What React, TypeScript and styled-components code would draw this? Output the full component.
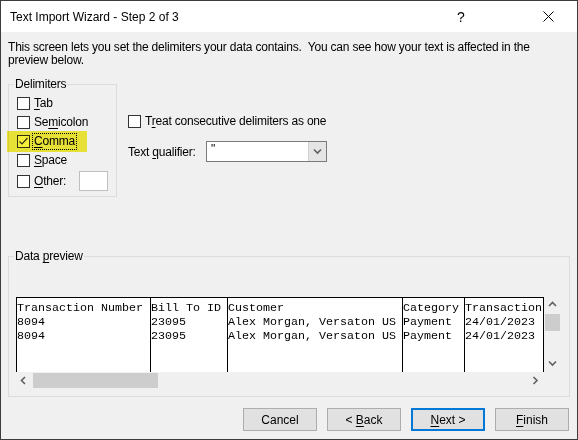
import React from "react";
import styled, { createGlobalStyle } from "styled-components";

const GlobalStyle = createGlobalStyle`
  html, body {
    margin: 0;
    padding: 0;
    background: #f0f0f0;
  }
  * {
    box-sizing: border-box;
  }
`;

const UI_FONT = `"Liberation Sans", Arial, sans-serif`;
const MONO_FONT = `"Liberation Mono", "Courier New", monospace`;

const Window = styled.div`
  width: 578px;
  height: 440px;
  border: 1px solid #3c3c3c;
  background: #f0f0f0;
  display: flex;
  flex-direction: column;
  font-family: ${UI_FONT};
  font-size: 12px;
  color: #000;
  overflow: hidden;
`;

const TitleBar = styled.div`
  height: 31px;
  flex: none;
  background: #fff;
  display: flex;
  align-items: center;
  padding: 0 6px 0 9px;
`;

const Title = styled.div`
  flex: 1;
`;

const TitleButton = styled.div<{ $gap?: number }>`
  width: 46px;
  height: 31px;
  margin-right: ${(p) => p.$gap ?? 0}px;
  display: flex;
  align-items: center;
  justify-content: center;
  font-size: 14px;
`;

const Body = styled.div`
  flex: 1;
  padding: 9px 7px 0 7px;
  display: flex;
  flex-direction: column;
  letter-spacing: -0.2px;
`;

const Intro = styled.p`
  margin: 0;
  line-height: 13px;
  white-space: nowrap;
`;

const TopSection = styled.div`
  display: flex;
  margin-top: 11px;
`;

const Group = styled.fieldset<{ $width?: number }>`
  margin: 0;
  min-width: 0;
  width: ${(p) => (p.$width ? `${p.$width}px` : "auto")};
  border: 1px solid #dcdcdc;
  padding: 0 8px 4px 8px;
`;

const Legend = styled.legend`
  padding: 0 1px;
  margin-left: -3px;
  line-height: 13px;
`;

const CheckList = styled.div`
  display: flex;
  flex-direction: column;
  padding-top: 3px;
`;

const CheckRow = styled.div<{ $tall?: boolean }>`
  position: relative;
  display: flex;
  align-items: center;
  gap: 4px;
  height: ${(p) => (p.$tall ? "22px" : "19px")};
`;

/* marker-pen highlight laid over a row */
const Highlight = styled.span`
  position: absolute;
  left: -10px;
  top: -1px;
  width: 80px;
  height: 21px;
  background: #f6ef3a;
  mix-blend-mode: multiply;
  pointer-events: none;
`;

const Box = styled.span`
  width: 13px;
  height: 13px;
  flex: none;
  border: 1px solid #333;
  background: #fff;
  display: flex;
  align-items: center;
  justify-content: center;
`;

const Label = styled.span<{ $focus?: boolean }>`
  line-height: 13px;
  padding: 1px;
  border: 1px dotted ${(p) => (p.$focus ? "#000" : "transparent")};
  margin-left: -2px;
  white-space: nowrap;
`;

const Key = styled.u`
  text-underline-offset: 2px;
`;

const SmallInput = styled.span`
  width: 29px;
  height: 20px;
  margin-left: auto;
  background: #fff;
  border: 1px solid #bfbfbf;
`;

const Options = styled.div`
  margin-left: 11px;
  padding-top: 35px;
  display: flex;
  flex-direction: column;
  gap: 11px;
`;

const OptionRow = styled.div`
  display: flex;
  align-items: center;
  gap: 4px;
`;

const FieldLabel = styled.span`
  width: 74px;
`;

const Combo = styled.div`
  width: 121px;
  height: 21px;
  background: #fff;
  border: 1px solid #7a7a7a;
  display: flex;
`;

const ComboValue = styled.span`
  flex: 1;
  padding-left: 4px;
  line-height: 15px;
`;

const ComboButton = styled.span`
  width: 18px;
  background: #e5e5e5;
  border-left: 1px solid #d0d0d0;
  display: flex;
  align-items: center;
  justify-content: center;
`;

const PreviewGroup = styled(Group)`
  margin-top: 53px;
  padding: 0 0 7px 7px;
`;

const PreviewLegend = styled(Legend)`
  margin-left: -2px;
`;

const Preview = styled.div`
  margin-top: 34px;
  display: grid;
  grid-template-columns: 528px 17px;
  grid-template-rows: 75px 17px;
`;

const Sheet = styled.div`
  background: #fff;
  border-top: 1px solid #000;
  display: flex;
  overflow: hidden;
  font-family: ${MONO_FONT};
  font-size: 11.67px;
  letter-spacing: 0;
`;

const Column = styled.div<{ $width: number; $last?: boolean }>`
  flex: none;
  width: ${(p) => p.$width}px;
  border-left: 1px solid #000;
  border-right: ${(p) => (p.$last ? "1px solid #000" : "none")};
  padding-top: 3px;
  white-space: pre;
  overflow: hidden;
`;

const Cell = styled.div`
  height: 14px;
  line-height: 14px;
`;

const ScrollV = styled.div`
  background: #f0f0f0;
  display: flex;
  flex-direction: column;
  align-items: center;
  justify-content: space-between;
  padding: 4px 0 5px;
  position: relative;
`;

const ThumbV = styled.div`
  position: absolute;
  left: 1px;
  top: 17px;
  width: 15px;
  height: 17px;
  background: #cdcdcd;
`;

const ScrollH = styled.div`
  background: #f0f0f0;
  display: flex;
  align-items: center;
  justify-content: space-between;
  padding: 0 5px 0 4px;
  position: relative;
`;

const ThumbH = styled.div`
  position: absolute;
  left: 17px;
  top: 1px;
  width: 125px;
  height: 15px;
  background: #cdcdcd;
`;

const Corner = styled.div`
  background: #f0f0f0;
`;

const ButtonRow = styled.div`
  display: flex;
  justify-content: flex-end;
  gap: 10px;
  margin-top: 11px;
  padding-right: 1px;
`;

const Button = styled.button<{ $default?: boolean }>`
  width: 74px;
  height: 23px;
  font-family: ${UI_FONT};
  font-size: 12px;
  color: #000;
  background: #e1e1e1;
  border: ${(p) => (p.$default ? "2px solid #0078d7" : "1px solid #adadad")};
  padding: 0;
`;

const Chevron = ({ dir }: { dir: "up" | "down" | "left" | "right" }) => {
  const points = {
    up: "1,5 4.5,1.5 8,5",
    down: "1,1.5 4.5,5 8,1.5",
    left: "5,1 1.5,4.5 5,8",
    right: "1.5,1 5,4.5 1.5,8",
  }[dir];
  const vertical = dir === "up" || dir === "down";
  return (
    <svg width={vertical ? 9 : 7} height={vertical ? 7 : 9} viewBox={vertical ? "0 0 9 7" : "0 0 7 9"}>
      <polyline points={points} fill="none" stroke="#606060" strokeWidth="1.6" />
    </svg>
  );
};

const Check = () => (
  <svg width="11" height="11" viewBox="0 0 11 11">
    <polyline points="1.5,5.5 4,8 9.5,2" fill="none" stroke="#333" strokeWidth="1.2" />
  </svg>
);

const columns = [
  { width: 134, cells: ["Transaction Number", "8094", "8094"] },
  { width: 77, cells: ["Bill To ID", "23095", "23095"] },
  { width: 175, cells: ["Customer", "Alex Morgan, Versaton US", "Alex Morgan, Versaton US"] },
  { width: 62, cells: ["Category", "Payment", "Payment"] },
  { width: 80, cells: ["Transaction", "24/01/2023", "24/01/2023"] },
];

type Delim = { pre: string; key: string; post: string; checked?: boolean; focus?: boolean };

const delimiters: Delim[] = [
  { pre: "", key: "T", post: "ab" },
  { pre: "Se", key: "m", post: "icolon" },
  { pre: "", key: "C", post: "omma", checked: true, focus: true },
  { pre: "", key: "S", post: "pace" },
];

export default function App() {
  return (
    <>
      <GlobalStyle />
      <Window>
        <TitleBar>
          <Title>Text Import Wizard - Step 2 of 3</Title>
          <TitleButton $gap={41}>?</TitleButton>
          <TitleButton>
            <svg width="11" height="11" viewBox="0 0 11 11">
              <path d="M0.5 0.5 L10.5 10.5 M10.5 0.5 L0.5 10.5" stroke="#000" strokeWidth="1" />
            </svg>
          </TitleButton>
        </TitleBar>
        <Body>
          <Intro>
            This screen lets you set the delimiters your data contains.&nbsp; You can see how your text is affected in the
            <br />
            preview below.
          </Intro>
          <TopSection>
            <Group $width={109}>
              <Legend>Delimiters</Legend>
              <CheckList>
                {delimiters.map((d) => (
                  <CheckRow key={d.post}>
                    <Box>{d.checked && <Check />}</Box>
                    <Label $focus={d.focus}>
                      {d.pre}
                      <Key>{d.key}</Key>
                      {d.post}
                    </Label>
                    {d.focus && <Highlight />}
                  </CheckRow>
                ))}
                <CheckRow $tall>
                  <Box />
                  <Label>
                    <Key>O</Key>ther:
                  </Label>
                  <SmallInput />
                </CheckRow>
              </CheckList>
            </Group>
            <Options>
              <OptionRow>
                <Box />
                <Label>
                  T<Key>r</Key>eat consecutive delimiters as one
                </Label>
              </OptionRow>
              <OptionRow>
                <FieldLabel>
                  Text <Key>q</Key>ualifier:
                </FieldLabel>
                <Combo>
                  <ComboValue>"</ComboValue>
                  <ComboButton>
                    <Chevron dir="down" />
                  </ComboButton>
                </Combo>
              </OptionRow>
            </Options>
          </TopSection>
          <PreviewGroup>
            <PreviewLegend>
              Data <Key>p</Key>review
            </PreviewLegend>
            <Preview>
              <Sheet>
                {columns.map((c, i) => (
                  <Column key={c.cells[0]} $width={c.width} $last={i === columns.length - 1}>
                    {c.cells.map((t, j) => (
                      <Cell key={j}>{t}</Cell>
                    ))}
                  </Column>
                ))}
              </Sheet>
              <ScrollV>
                <Chevron dir="up" />
                <ThumbV />
                <Chevron dir="down" />
              </ScrollV>
              <ScrollH>
                <Chevron dir="left" />
                <ThumbH />
                <Chevron dir="right" />
              </ScrollH>
              <Corner />
            </Preview>
          </PreviewGroup>
          <ButtonRow>
            <Button>Cancel</Button>
            <Button>
              &lt; <Key>B</Key>ack
            </Button>
            <Button $default>
              <Key>N</Key>ext &gt;
            </Button>
            <Button>
              <Key>F</Key>inish
            </Button>
          </ButtonRow>
        </Body>
      </Window>
    </>
  );
}
